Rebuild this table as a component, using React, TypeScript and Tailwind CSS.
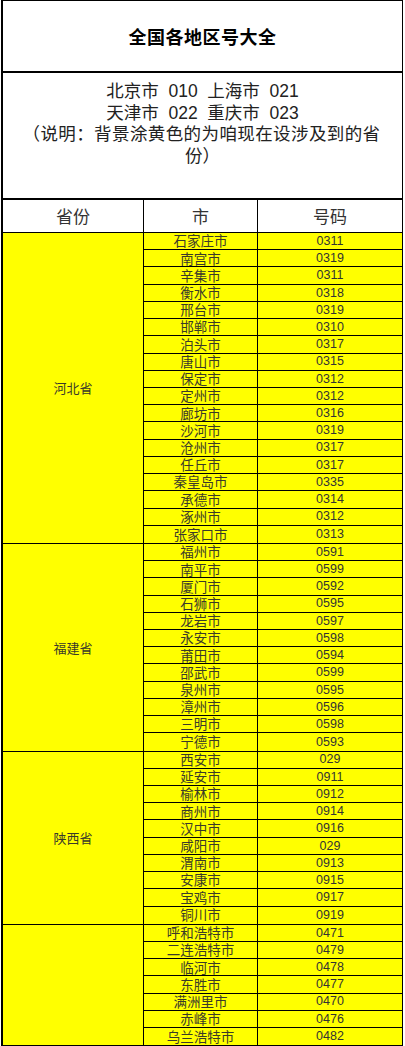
import React from 'react'

type City = [string, string]

interface Group {
  province: string
  cities: City[]
}

const groups: Group[] = [
  {
    province: '河北省',
    cities: [
      ['石家庄市', '0311'],
      ['南宫市', '0319'],
      ['辛集市', '0311'],
      ['衡水市', '0318'],
      ['邢台市', '0319'],
      ['邯郸市', '0310'],
      ['泊头市', '0317'],
      ['唐山市', '0315'],
      ['保定市', '0312'],
      ['定州市', '0312'],
      ['廊坊市', '0316'],
      ['沙河市', '0319'],
      ['沧州市', '0317'],
      ['任丘市', '0317'],
      ['秦皇岛市', '0335'],
      ['承德市', '0314'],
      ['涿州市', '0312'],
      ['张家口市', '0313'],
    ],
  },
  {
    province: '福建省',
    cities: [
      ['福州市', '0591'],
      ['南平市', '0599'],
      ['厦门市', '0592'],
      ['石狮市', '0595'],
      ['龙岩市', '0597'],
      ['永安市', '0598'],
      ['莆田市', '0594'],
      ['邵武市', '0599'],
      ['泉州市', '0595'],
      ['漳州市', '0596'],
      ['三明市', '0598'],
      ['宁德市', '0593'],
    ],
  },
  {
    province: '陕西省',
    cities: [
      ['西安市', '029'],
      ['延安市', '0911'],
      ['榆林市', '0912'],
      ['商州市', '0914'],
      ['汉中市', '0916'],
      ['咸阳市', '029'],
      ['渭南市', '0913'],
      ['安康市', '0915'],
      ['宝鸡市', '0917'],
      ['铜川市', '0919'],
    ],
  },
  {
    // label sits below the visible part of the sheet
    province: '',
    cities: [
      ['呼和浩特市', '0471'],
      ['二连浩特市', '0479'],
      ['临河市', '0478'],
      ['东胜市', '0477'],
      ['满洲里市', '0470'],
      ['赤峰市', '0476'],
      ['乌兰浩特市', '0482'],
    ],
  },
]

const cjk = "font-['Noto_Sans_CJK_SC',sans-serif]"
const mixed = "font-['Liberation_Sans','Noto_Sans_CJK_SC',sans-serif]"

export default function App() {
  return (
    <div className="w-[405px] bg-white">
      <div className="w-[402px] ml-[1px] border-l-2 border-r border-t border-black">
        {/* title */}
        <div className="h-[72px] border-b-2 border-black flex items-center justify-center">
          <h1 className={`${cjk} text-[18px] font-bold text-black tracking-[0.5px]`}>全国各地区号大全</h1>
        </div>

        {/* note */}
        <div className={`${mixed} h-[127px] border-b-2 border-black pt-[8px] text-center text-[17.5px] leading-[21.7px] text-[#222]`}>
          <p className="whitespace-pre">北京市  010  上海市  021</p>
          <p className="whitespace-pre">天津市  022  重庆市  023</p>
          <p className="whitespace-nowrap -ml-[2px] tracking-[0.4px]">（说明：背景涂黄色的为咱现在设涉及到的省</p>
          <p>份）</p>
        </div>

        {/* header */}
        <div className={`${cjk} flex h-[33px] border-b border-black text-[17px] text-[#333]`}>
          <div className="w-[141px] border-r border-black flex items-center justify-center">省份</div>
          <div className="w-[114px] border-r border-black flex items-center justify-center">市</div>
          <div className="flex-1 flex items-center justify-center">号码</div>
        </div>

        {groups.map((g, gi) => (
          <div key={gi} className="flex bg-[#ffff00] border-b border-black">
            <div className={`${cjk} w-[141px] border-r border-black flex items-center justify-center text-[13px] text-[#3a3a2a]`}>
              {g.province}
            </div>
            <div className="flex-1">
              {g.cities.map(([name, code], i) => (
                <div
                  key={name}
                  className={`flex h-[17.22px] ${i < g.cities.length - 1 ? 'border-b border-black' : ''}`}
                >
                  <div className={`${cjk} w-[114px] border-r border-black flex items-center justify-center text-[13.5px] leading-none text-[#3a3a2a]`}>
                    {name}
                  </div>
                  <div className="flex-1 flex items-center justify-center font-['Liberation_Sans',Arial,sans-serif] text-[12.5px] leading-none text-[#333]">
                    {code}
                  </div>
                </div>
              ))}
            </div>
          </div>
        ))}
      </div>
    </div>
  )
}
